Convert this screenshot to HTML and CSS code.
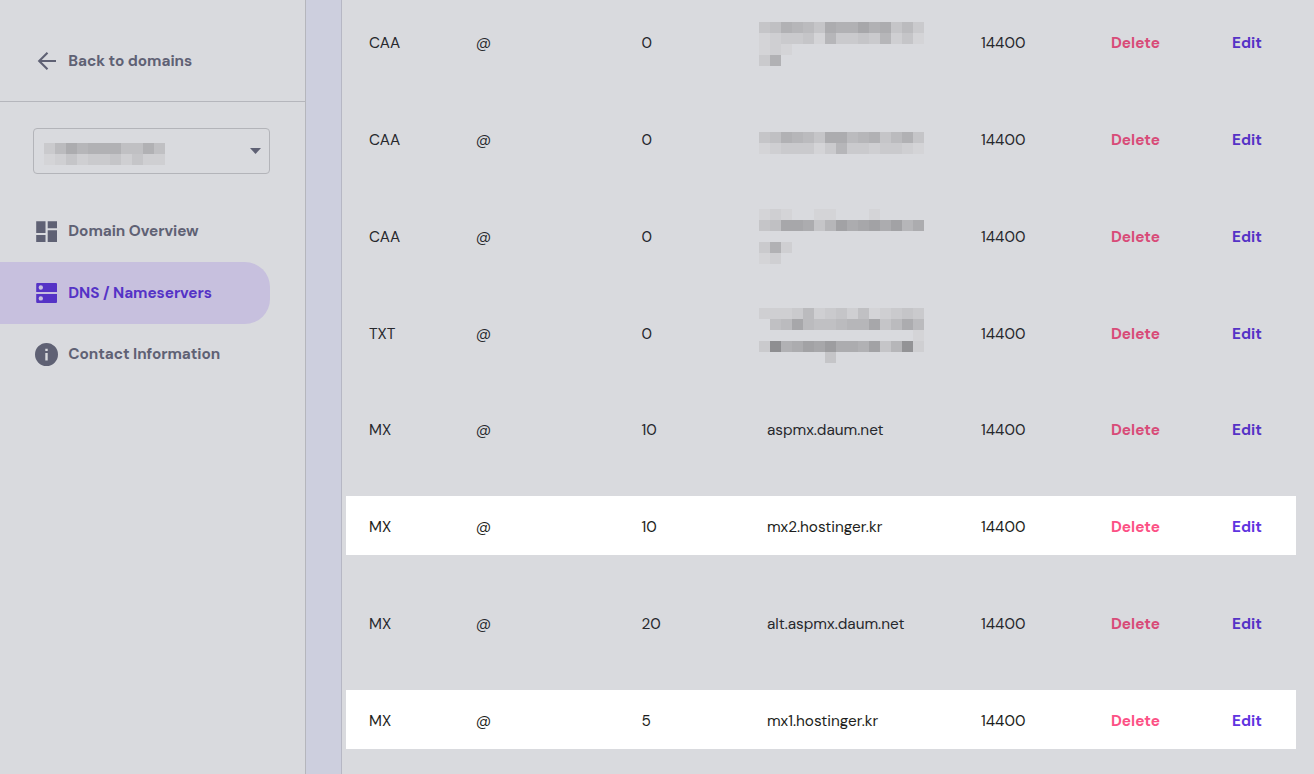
FILE: index.html
```html
<!DOCTYPE html>
<html lang="en">

<head>
    <meta charset="UTF-8">
    <meta name="viewport" content="width=device-width, initial-scale=1.0">
    <title>DNS / Nameservers</title>
    <link rel="stylesheet" href="styles.css">
</head>

<body>
    <div class="page">
        <div class="sidebar">
            <a href="#" class="back">
                <svg class="icon" viewBox="-0.500 0 24 24" fill="none" stroke="currentColor" stroke-width="2.1"><path d="M21.500 12H4.800M13 3.800L4.700 12l8.300 8.200"/></svg>
                <span>Back to domains</span>
            </a>
            <div class="select">
                <svg class="mosaic" data-rows="36978885585 12423342422"></svg>
                <svg class="caret" width="11" height="6" viewBox="0 0 11 6"><path d="M0 0h11L5.500 6z" fill="currentColor"/></svg>
            </div>
            <ul class="menu">
                <li>
                    <svg class="icon" viewBox="-0.500 0 24 24" fill="currentColor"><path d="M1.700 1.300h9.300v11.600h-9.300zM13.200 1.300h9.300v7h-9.300zM13.200 10.300h9.300v11.600h-9.300zM1.700 14.900h9.300v7h-9.300z"/></svg>
                    <span>Domain Overview</span>
                </li>
                <li class="on">
                    <svg class="icon" viewBox="-0.500 0 24 24" fill="currentColor" fill-rule="evenodd"><path d="M2.700 2h18.800a1 1 0 0 1 1 1v8h-20.800V3a1 1 0 0 1 1-1zM6.300 4.300a2.200 2.200 0 1 0 0 4.400a2.200 2.200 0 1 0 0-4.400zM1.700 13h20.800v8a1 1 0 0 1-1 1h-18.800a1 1 0 0 1-1-1zM6.300 15.200a2.200 2.200 0 1 0 0 4.400a2.200 2.200 0 1 0 0-4.400z"/></svg>
                    <span>DNS / Nameservers</span>
                </li>
                <li>
                    <svg class="icon" viewBox="-0.500 0.500 24 24" fill="currentColor" fill-rule="evenodd"><path d="M12 .5a11.500 11.500 0 1 0 0 23a11.500 11.500 0 1 0 0-23zM10.800 6.200h2.400v2.400h-2.400zM10.800 10.400h2.400v7.600h-2.400z"/></svg>
                    <span>Contact Information</span>
                </li>
            </ul>
        </div>
        <div class="gutter"></div>
        <div class="records">
            <div class="row">
                <span>CAA</span><span>@</span><span>0</span>
                <svg class="mosaic m1" data-rows="458764988a89463 123341733437241 121 38"></svg>
                <span>14400</span><a href="#" class="delete">Delete</a><a href="#" class="edit">Edit</a>
            </div>
            <div class="row">
                <span>CAA</span><span>@</span><span>0</span>
                <svg class="mosaic m2" data-rows="458764996784684 123331373323321"></svg>
                <span>14400</span><a href="#" class="delete">Delete</a><a href="#" class="edit">Edit</a>
            </div>
            <div class="row">
                <span>CAA</span><span>@</span><span>0</span>
                <svg class="mosaic m3" data-rows="121001100010000 45aa947b9ab9b79 0 382 12"></svg>
                <span>14400</span><a href="#" class="delete">Delete</a><a href="#" class="edit">Edit</a>
            </div>
            <div class="row">
                <span>TXT</span><span>@</span><span>0</span>
                <svg class="mosaic m4" data-rows="222362342512343 056a655677a46965 000000000000001 3f89bac998b47e2 0000004"></svg>
                <span>14400</span><a href="#" class="delete">Delete</a><a href="#" class="edit">Edit</a>
            </div>
            <div class="row">
                <span>MX</span><span>@</span><span>10</span>
                <span>aspmx.daum.net</span>
                <span>14400</span><a href="#" class="delete">Delete</a><a href="#" class="edit">Edit</a>
            </div>
            <div class="row on">
                <span>MX</span><span>@</span><span>10</span>
                <span>mx2.hostinger.kr</span>
                <span>14400</span><a href="#" class="delete">Delete</a><a href="#" class="edit">Edit</a>
            </div>
            <div class="row">
                <span>MX</span><span>@</span><span>20</span>
                <span>alt.aspmx.daum.net</span>
                <span>14400</span><a href="#" class="delete">Delete</a><a href="#" class="edit">Edit</a>
            </div>
            <div class="row on">
                <span>MX</span><span>@</span><span>5</span>
                <span>mx1.hostinger.kr</span>
                <span>14400</span><a href="#" class="delete">Delete</a><a href="#" class="edit">Edit</a>
            </div>
        </div>
    </div>
    <script src="mosaic.js"></script>
</body>

</html>
```
FILE: styles.css
```css
* {
    box-sizing: border-box;
}

body,
ul {
    margin: 0;
    padding: 0;
}

body {
    font-family: "DM Sans", Inter, "Liberation Sans", sans-serif;
    font-size: 15.35px;
    line-height: 20px;
    color: #27282d;
    background-color: #d9dade;
}

a {
    color: inherit;
    text-decoration: none;
}

.page {
    display: flex;
    height: 774px;
    overflow: hidden;
}

/* sidebar */
.sidebar {
    width: 306px;
    flex: none;
    border-right: 1px solid #b5b6bc;
    color: #5f6174;
    font-weight: 700;
    letter-spacing: -0.06px;
}

.icon {
    width: 24px;
    height: 24px;
    flex: none;
    margin-right: 10.3px;
}

.back {
    display: flex;
    align-items: center;
    height: 102px;
    padding: 20px 0 0 34px;
    border-bottom: 1px solid #b5b6bc;
}

.select {
    display: flex;
    justify-content: space-between;
    align-items: flex-start;
    width: 237px;
    height: 46px;
    margin: 26px 0 0 33px;
    padding: 14px 8px 0 10px;
    border: 1px solid #b3b4b9;
    border-radius: 4px;
}

.caret {
    margin-top: 5px;
}

.menu {
    margin-top: 26px;
    list-style: none;
}

.menu li {
    display: flex;
    align-items: center;
    width: 270px;
    height: 62px;
    padding-left: 34px;
}

.menu li:first-child .icon {
    margin-top: 1px;
}

.menu li:last-child {
    height: 60px;
}

.menu li:last-child .icon {
    margin-top: 1px;
}

.menu li.on {
    color: #5533c6;
    background-color: #c7c0de;
    border-radius: 0 25px 25px 0;
}

.gutter {
    width: 36px;
    flex: none;
    background-color: #cdcfde;
    border-right: 1px solid #b6b7c4;
}

/* records table */
.records {
    flex: 1;
    padding: 11.8px 18px 0 4px;
}

.row {
    display: grid;
    grid-template-columns: 106.8px 165.7px 125.4px 214.1px 130px 121px auto;
    align-items: center;
    height: 59px;
    margin-bottom: 37.86px;
    padding: 3px 0 0 23px;
}

.row.on {
    color: #1d1e20;
    background-color: #fff;
}

.delete,
.edit {
    font-weight: 700;
}

.delete {
    color: #d84b78;
}

.edit {
    color: #5533c6;
}

.on .delete {
    color: #fc5185;
}

.on .edit {
    color: #5f35e0;
}

.mosaic {
    display: block;
    align-self: start;
}

.row .mosaic {
    margin-left: -7.9px;
}

.m1 {
    margin-top: 7px;
}

.m2 {
    margin-top: 20px;
}

.m3 {
    margin-top: 0.5px;
}

.m4 {
    margin-top: 2.5px;
}
```
FILE: mosaic.js
```js
// each hex digit is the darkness of one 11px block
var size = 11;
var mosaics = document.getElementsByClassName('mosaic');

for (var i = 0; i < mosaics.length; i++) {
    var rows = mosaics[i].getAttribute('data-rows').split(' ');
    mosaics[i].setAttribute('width', rows[0].length * size);
    mosaics[i].setAttribute('height', rows.length * size);
    for (var y = 0; y < rows.length; y++) {
        for (var x = 0; x < rows[y].length; x++) {
            var level = parseInt(rows[y][x], 16);
            if (level == 0) {
                continue;
            }
            var rect = document.createElementNS('http://www.w3.org/2000/svg', 'rect');
            rect.setAttribute('x', x * size);
            rect.setAttribute('y', y * size);
            rect.setAttribute('width', size);
            rect.setAttribute('height', size);
            rect.setAttribute('shape-rendering', 'crispEdges');
            rect.setAttribute('fill', 'rgb(' + (217 - level * 5) + ',' + (217 - level * 5) + ',' + (220 - level * 5) + ')');
            mosaics[i].appendChild(rect);
        }
    }
}
```
